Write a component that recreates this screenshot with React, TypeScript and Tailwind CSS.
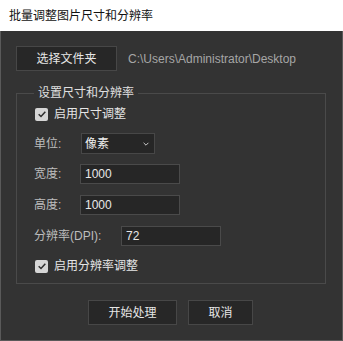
import { useState } from 'react'

const font = "font-['Liberation_Sans','Noto_Sans_CJK_SC',sans-serif]"

const CheckRow = ({ label, checked, onToggle }: { label: string; checked: boolean; onToggle: () => void }) => (
  <label className="flex h-[14px] cursor-pointer items-center gap-[6px] pl-[1px]">
    <span
      onClick={onToggle}
      className="flex h-[13px] w-[13px] items-center justify-center rounded-[2px] bg-[#d6d6d6]"
    >
      {checked && (
        <svg viewBox="0 0 12 12" className="h-[10px] w-[10px]">
          <path d="M2 6.2 L4.8 9 L10 3.2" fill="none" stroke="#2e2e2e" strokeWidth="1.8" />
        </svg>
      )}
    </span>
    <span className="text-[12px] leading-none text-[#e6e6e6]">{label}</span>
  </label>
)

const FieldRow = ({
  label,
  labelWidth,
  value,
  onChange,
}: {
  label: string
  labelWidth: string
  value: string
  onChange: (v: string) => void
}) => (
  <div className="flex h-[20px] items-center">
    <span className={`${labelWidth} text-[12px] leading-none text-[#bdbdbd]`}>{label}</span>
    <input
      className="h-[20px] w-[100px] border border-[#4a4a4a] bg-[#262626] px-[4px] text-[12px] text-[#e8e8e8] outline-none"
      value={value}
      onChange={(e) => onChange(e.target.value)}
    />
  </div>
)

const App = () => {
  const [sizeOn, setSizeOn] = useState(true)
  const [dpiOn, setDpiOn] = useState(true)
  const [width, setWidth] = useState('1000')
  const [height, setHeight] = useState('1000')
  const [dpi, setDpi] = useState('72')

  return (
    <div className={`flex h-[341px] w-[343px] flex-col ${font}`}>
      <div className="flex h-[31px] shrink-0 items-center bg-white pl-[9px] text-[12px] text-[#111]">
        批量调整图片尺寸和分辨率
      </div>

      <div className="flex flex-1 flex-col border-x border-b border-[#5a5a5a] bg-[#333333] px-[15px] pt-[15px]">
        <div className="flex items-center gap-[11px]">
          <button className="h-[25px] w-[101px] border border-[#474747] bg-[#272727] text-[12px] text-[#e6e6e6]">
            选择文件夹
          </button>
          <span className="text-[12px] text-[#a6a6a6]">C:\Users\Administrator\Desktop</span>
        </div>

        <fieldset className="mt-[14px] w-[310px] border border-[#4a4a4a] pb-[10px] pl-[17px]">
          <legend className="px-[4px] text-[12px] leading-[16px] text-[#e0e0e0]">设置尺寸和分辨率</legend>

          <div className="mt-[6px]">
            <CheckRow label="启用尺寸调整" checked={sizeOn} onToggle={() => setSizeOn(!sizeOn)} />
          </div>

          <div className="mt-[12px] flex h-[21px] items-center">
            <span className="w-[47px] text-[12px] leading-none text-[#bdbdbd]">单位:</span>
            <div className="flex h-[21px] w-[74px] items-center justify-between border border-[#474747] bg-[#262626] pl-[3px] pr-[4px]">
              <span className="text-[12px] text-[#f0f0f0]">像素</span>
              <svg viewBox="0 0 10 10" className="h-[8px] w-[8px]">
                <path d="M2 3.5 L5 6.5 L8 3.5" fill="none" stroke="#cfcfcf" strokeWidth="1.2" />
              </svg>
            </div>
          </div>

          <div className="mt-[10px]">
            <FieldRow label="宽度:" labelWidth="w-[46px]" value={width} onChange={setWidth} />
          </div>
          <div className="mt-[11px]">
            <FieldRow label="高度:" labelWidth="w-[46px]" value={height} onChange={setHeight} />
          </div>
          <div className="mt-[11px]">
            <FieldRow label="分辨率(DPI):" labelWidth="w-[87px]" value={dpi} onChange={setDpi} />
          </div>

          <div className="mt-[13px]">
            <CheckRow label="启用分辨率调整" checked={dpiOn} onToggle={() => setDpiOn(!dpiOn)} />
          </div>
        </fieldset>

        <div className="mt-[16px] flex justify-center gap-[11px] pr-[2px]">
          <button className="h-[25px] w-[89px] border border-[#474747] bg-[#272727] text-[12px] text-[#e6e6e6]">
            开始处理
          </button>
          <button className="h-[25px] w-[65px] border border-[#474747] bg-[#272727] text-[12px] text-[#e6e6e6]">
            取消
          </button>
        </div>
      </div>
    </div>
  )
}

export default App
